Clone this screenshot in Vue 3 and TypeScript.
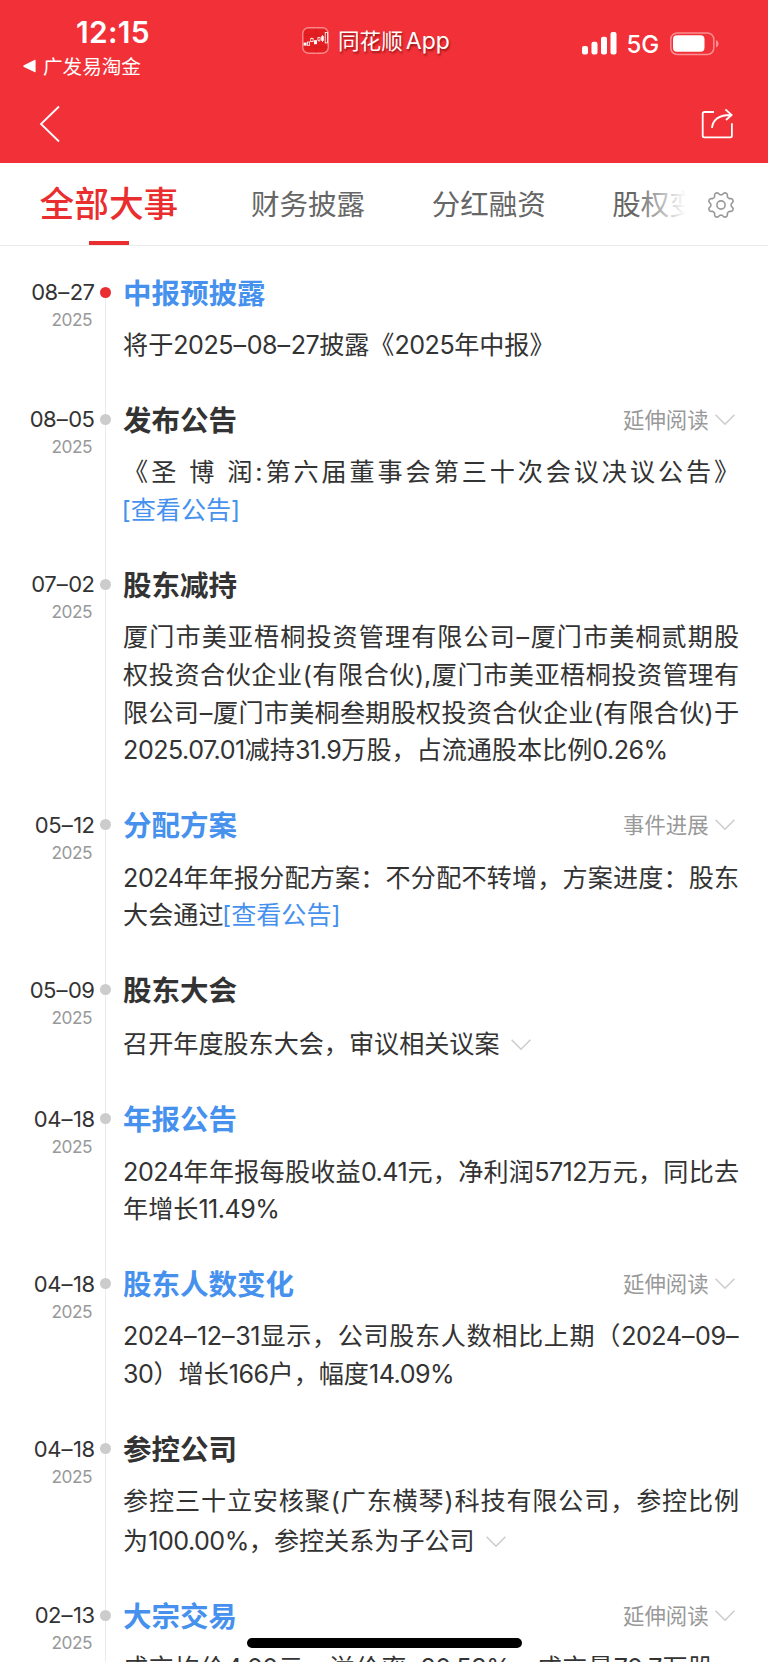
<script setup lang="ts">
interface Part { text: string; kind: 'cjk' | 'latin' | 'dash' | 'link' }
interface Line { parts: Part[]; fill: boolean; arrow: boolean }
interface Entry {
  date: string
  title: string
  blue?: boolean
  current?: boolean
  more?: string
  lines: Line[]
}

function kindOf(text: string): Part['kind'] {
  if (text[0] === '[') return 'link'
  if (text[0] === '–') return 'dash'
  return /^[0-9.%]/.test(text) ? 'latin' : 'cjk'
}

// Splits a text into Chinese runs, numbers, dashes and [links], so each gets its own tracking.
function split(src: string): Part[] {
  return (src.match(/\[[^\]]+\]|–|[0-9.%]+|[^0-9.%–[]+/g) ?? []).map((text) => ({ text, kind: kindOf(text) }))
}

function line(src: string, fill = false, arrow = false): Line {
  return { parts: split(src), fill, arrow }
}

// Rounded eight-toothed outline of the settings gear.
function gearPath(cx: number, cy: number): string {
  const points: string[] = []
  for (let step = 0; step < 96; step++) {
    const a = (step / 96) * Math.PI * 2
    const wave = Math.tanh(-Math.cos(8 * a) * 1.6) / Math.tanh(1.6)
    const r = 11.5 + 1.35 * wave
    points.push(`${(cx + r * Math.cos(a)).toFixed(2)} ${(cy + r * Math.sin(a)).toFixed(2)}`)
  }
  return `M${points.join('L')}z`
}

const gear = gearPath(14, 14)
const tabs = ['财务披露', '分红融资', '股权变动']

const entries: Entry[] = [
  { date: '08–27', title: '中报预披露', blue: true, current: true, lines: [line('将于2025–08–27披露《2025年中报》')] },
  {
    date: '08–05', title: '发布公告', more: '延伸阅读',
    lines: [line('《圣 博 润:第六届董事会第三十次会议决议公告》', true), line('[查看公告]')],
  },
  {
    date: '07–02', title: '股东减持',
    lines: [
      line('厦门市美亚梧桐投资管理有限公司–厦门市美桐贰期股', true),
      line('权投资合伙企业(有限合伙),厦门市美亚梧桐投资管理有', true),
      line('限公司–厦门市美桐叁期股权投资合伙企业(有限合伙)于', true),
      line('2025.07.01减持31.9万股，占流通股本比例0.26%'),
    ],
  },
  {
    date: '05–12', title: '分配方案', blue: true, more: '事件进展',
    lines: [line('2024年年报分配方案：不分配不转增，方案进度：股东', true), line('大会通过[查看公告]')],
  },
  { date: '05–09', title: '股东大会', lines: [line('召开年度股东大会，审议相关议案', false, true)] },
  {
    date: '04–18', title: '年报公告', blue: true,
    lines: [line('2024年年报每股收益0.41元，净利润5712万元，同比去', true), line('年增长11.49%')],
  },
  {
    date: '04–18', title: '股东人数变化', blue: true, more: '延伸阅读',
    lines: [line('2024–12–31显示，公司股东人数相比上期（2024–09–', true), line('30）增长166户，幅度14.09%')],
  },
  {
    date: '04–18', title: '参控公司',
    lines: [line('参控三十立安核聚(广东横琴)科技有限公司，参控比例', true), line('为100.00%，参控关系为子公司', false, true)],
  },
  {
    date: '02–13', title: '大宗交易', blue: true, more: '延伸阅读',
    lines: [line('成交均价4.00元，溢价率–20.53%，成交量70.7万股，', true)],
  },
]
</script>

<template>
  <div class="screen" lang="zh-CN">
    <header class="header">
      <div class="status">
        <div class="status-left">
          <div class="clock">12:15</div>
          <div class="return">
            <svg width="13" height="14" viewBox="0 0 13 14"><path d="M12.6 1.6v10.8q0 1.2-1.2.7L.9 8q-1.3-.9 0-1.8L11.4.9q1.2-.5 1.2.7z" fill="#fff" /></svg>
            <span>广发易淘金</span>
          </div>
        </div>
        <div class="app">
          <svg width="27" height="27" viewBox="0 0 27 27">
            <rect x=".8" y=".8" width="25.4" height="25.4" rx="5.5" fill="#e51e22" stroke="#f9898c" stroke-width="1.4" />
            <path d="M1.5 20H26M14 1.5V26M1.5 8H26" stroke="#c91d20" stroke-width=".5" />
            <g fill="#fff"><rect x="1.6" y="15.6" width="3" height="3" /><rect x="12" y="13.2" width="3" height="4" /><rect x="19.2" y="9.2" width="2.6" height="4.6" /></g>
            <g fill="none" stroke="#fff" stroke-width=".8"><rect x="5.4" y="15" width="2.2" height="3.3" /><rect x="8.7" y="11.6" width="2.4" height="3" /><rect x="15.9" y="10.6" width="2.2" height="2.6" /><rect x="23.2" y="5.5" width="2.2" height="10.4" /><path d="M9.9 10.6v1M17 13.2v1.5M20.5 8v7" /></g>
          </svg>
          <span class="app-name">同花顺</span><span class="app-latin">App</span>
        </div>
        <div class="status-right">
          <svg width="35" height="23" viewBox="0 0 35 23" fill="#fff">
            <rect x="0" y="14" width="6" height="8.5" rx="2" /><rect x="9.5" y="9.7" width="6" height="12.8" rx="2" />
            <rect x="19" y="4.7" width="6" height="17.8" rx="2" /><rect x="28.5" y="0" width="6" height="22.5" rx="2" />
          </svg>
          <span class="net">5G</span>
          <svg width="49" height="24" viewBox="0 0 49 24">
            <rect x=".8" y=".9" width="43" height="21.6" rx="6.5" fill="none" stroke="#f98f93" stroke-width="1.5" />
            <rect x="3" y="3.2" width="31.5" height="16.6" rx="4" fill="#fff" />
            <path d="M46 8v7.5q2.6-1 2.6-3.75T46 8z" fill="#f98f93" />
          </svg>
        </div>
      </div>
      <div class="nav">
        <svg width="22" height="38" viewBox="0 0 22 38"><path d="M20 1.5 2 19l18 17.5" fill="none" stroke="#fff" stroke-width="1.8" /></svg>
        <svg width="32" height="32" viewBox="0 0 32 32" fill="none" stroke="#fff" stroke-width="1.8">
          <path d="M13 4H3.3Q1.7 4 1.7 5.6v22.2q0 1.6 1.6 1.6h26q1.6 0 1.6-1.6V15.3" />
          <path d="M11 20C11.8 11.8 18 7 29.8 7M24.4 1.4 30.6 7l-5.6 5" />
        </svg>
      </div>
    </header>

    <nav class="tabs">
      <div class="tab active">全部大事</div>
      <div v-for="tab in tabs" :key="tab" class="tab">{{ tab }}</div>
      <div class="tools">
        <svg width="28" height="28" viewBox="0 0 28 28" fill="none" stroke="#999" stroke-width="1.6">
          <path :d="gear" stroke-linejoin="round" />
          <circle cx="14" cy="14" r="4.1" />
        </svg>
      </div>
    </nav>

    <main class="timeline">
      <section v-for="(entry, i) in entries" :key="i" class="entry">
        <div class="when">
          <div class="date"><span v-for="(p, k) in split(entry.date)" :key="k" :class="p.kind">{{ p.text }}</span></div>
          <div class="year">2025</div>
        </div>
        <div class="rail"><i class="dot" :class="{ red: entry.current }"></i></div>
        <div class="content">
          <div class="title-row">
            <h2 class="title" :class="{ blue: entry.blue }">{{ entry.title }}</h2>
            <div v-if="entry.more" class="more">
              <span>{{ entry.more }}</span>
              <svg width="20" height="12" viewBox="0 0 20 12"><path d="M.6.8 10 10.3 19.4.8" fill="none" stroke="#ccc" stroke-width="1.5" /></svg>
            </div>
          </div>
          <div class="body">
            <div v-for="(ln, j) in entry.lines" :key="j" class="line" :class="{ fill: ln.fill, arrow: ln.arrow }"><span v-for="(p, k) in ln.parts" :key="k" :class="p.kind">{{ p.text }}</span><svg v-if="ln.arrow" class="expand" width="20" height="12" viewBox="0 0 20 12"><path d="M.6.8 10 10.3 19.4.8" fill="none" stroke="#ccc" stroke-width="1.5" /></svg></div>
          </div>
        </div>
      </section>
    </main>
    <div class="home-bar"></div>
  </div>
</template>

<style>
body { margin: 0; background: #fff; }
</style>

<style scoped>
.screen {
  position: relative;
  width: 768px;
  height: 1662px;
  overflow: hidden;
  background: #fff;
  color: #333;
  font-family: Inter, "Noto Sans CJK SC", sans-serif;
  text-spacing-trim: space-all;
}
svg { display: block; flex: none; }
.header { height: 163.3px; background: #f23037; color: #fff; }
.status { display: flex; height: 84px; }
.status-left { width: 302px; box-sizing: border-box; padding: 15px 0 0 23px; flex: none; }
.clock { margin-left: 53px; font-size: 30px; line-height: 35px; font-weight: 600; letter-spacing: 0.3px; }
.return { display: flex; align-items: center; gap: 7px; height: 34px; margin-top: -1.5px; font-size: 19.6px; }
.app { display: flex; flex: none; height: 27px; padding-top: 27px; width: 280px; line-height: 29px; text-shadow: 1px 2px 2px rgba(80, 0, 0, .55); }
.app-name { margin-left: 9px; font-size: 21.6px; }
.app-latin { margin-left: 3px; font-size: 23px; }
.status-right { display: flex; flex: none; height: 24px; padding-top: 32px; }
.net { width: 53px; padding-left: 9.5px; box-sizing: border-box; font-size: 24px; line-height: 26px; letter-spacing: -0.2px; font-weight: 500; }
.nav { display: flex; justify-content: space-between; align-items: center; height: 79px; padding: 0 35px 0 39px; }

.tabs { display: flex; position: relative; height: 82.2px; border-bottom: 1.5px solid #ebebeb; font-size: 28.5px; color: #666; overflow: hidden; }
.tab { flex: none; margin-left: 66.7px; line-height: 84px; white-space: nowrap; }
.tab.active { display: flex; flex-direction: column; align-items: center; margin-left: 39.5px; margin-right: 6px; font-size: 34.7px; font-weight: 500; line-height: 82px; color: #ea2e2f; height: 82.2px; }
.tab.active::after { content: ""; width: 40.5px; height: 4px; margin-top: -4px; background: #ea2e2f; }
.tools { position: absolute; right: 0; top: 0; width: 134px; height: 82px; box-sizing: border-box; padding: 27.7px 0 0 73px; background: linear-gradient(90deg, rgba(255, 255, 255, 0), #fff 52px); }

.timeline { padding-top: 25.7px; }
.entry { display: flex; }
.when { width: 94.5px; text-align: right; flex: none; }
.date { height: 40px; line-height: 40px; font-size: 22px; letter-spacing: -0.6px; }
.date .dash { letter-spacing: 0.4px; margin-left: 0.6px; }
.date .latin { letter-spacing: -0.5px; }
.year { margin: -3px 2.5px 0 0; font-size: 17.3px; line-height: 22px; letter-spacing: -0.5px; color: #999; }
.rail { width: 28.6px; flex: none; background: linear-gradient(#ebebeb, #ebebeb) 10px 0 / 1px 100% no-repeat; }
.entry:first-child .rail { background-position: 10px 20px; }
.dot { display: block; width: 11px; height: 11px; margin: 14.5px 0 0 5.3px; border-radius: 50%; background: #ccc; }
.dot.red { background: #ea2e2f; }
.content { width: 616px; }
.title-row { display: flex; justify-content: space-between; align-items: center; height: 40px; }
.title { margin: 3.4px 0 0; font-size: 28.5px; font-weight: 600; line-height: 40px; }
.blue { color: #4691ee; }
.more { display: flex; align-items: center; gap: 6px; margin: 1px 4.5px 0 0; font-size: 21.4px; line-height: 40px; color: #999; }
.body { padding: 14.9px 0 34.7px; font-size: 25.1px; }
.line { height: 37.7px; line-height: 37.7px; white-space: nowrap; }
.line.fill { text-align: justify; text-align-last: justify; white-space: normal; }
.line.arrow { display: flex; align-items: center; padding-top: 1.7px; }
.latin { letter-spacing: -0.5px; }
.dash { letter-spacing: 0.5px; margin-left: 0.6px; }
.link { color: #4691ee; margin-left: -1.5px; }
.expand { margin-left: 11px; }
.home-bar { position: absolute; left: 247px; bottom: 14.5px; width: 274.5px; height: 9.5px; border-radius: 5px; background: #000; }
</style>
